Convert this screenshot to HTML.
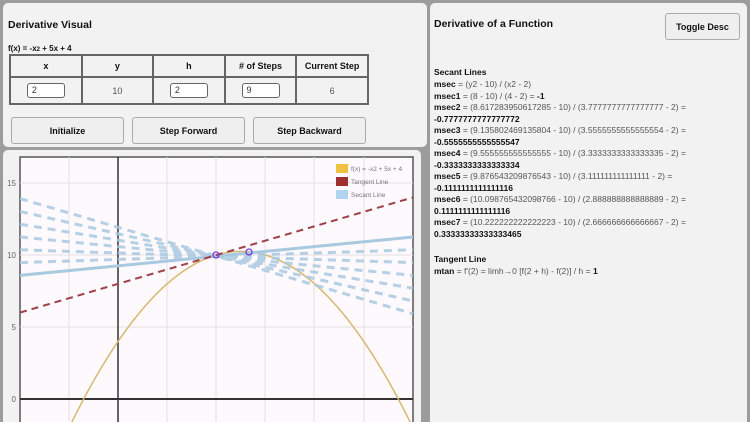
<!DOCTYPE html>
<html><head><meta charset="utf-8"><style>
*{margin:0;padding:0;box-sizing:border-box}
html,body{width:750px;height:422px;overflow:hidden}
body{background:#9c9c9c;font-family:"Liberation Sans",sans-serif;position:relative;color:#111}
.p{position:absolute;background:#f2f2f2;border-radius:5px}
.b{font-weight:bold}
.abs{position:absolute}
table{border-collapse:collapse;position:absolute;left:9px;top:54px;width:360px}
td{border:2px solid #666;text-align:center;font-size:9px;height:22px;width:72px}
tr.r td{height:27px;color:#555}
.in{display:inline-block;width:38px;height:15px;border:1px solid #666;border-radius:3px;background:#fff;text-align:left;padding-left:4px;line-height:13px;color:#333}
.btn{position:absolute;top:117px;width:113px;height:27px;background:#efefef;border:1px solid #aaa;border-radius:3px;font-size:9px;font-weight:bold;text-align:center;line-height:26px}
.rt{position:absolute;left:434px;font-size:8.5px;color:#555;white-space:nowrap}
.rt b{color:#111}
</style></head><body>
<div class="p" style="left:3px;top:3px;width:424px;height:144px"></div>
<div class="p" style="left:3px;top:150px;width:418px;height:272px;border-radius:5px 5px 0 0"></div>
<div class="p" style="left:430px;top:3px;width:317px;height:419px;border-radius:5px 5px 0 0"></div>
<div class="abs b" style="left:8px;top:19px;font-size:10.5px">Derivative Visual</div>
<div class="abs b" style="left:8px;top:44px;font-size:8px">f(x) = -x<span style="font-size:6px">2</span> + 5x + 4</div>
<table>
<tr><td class="b">x</td><td class="b">y</td><td class="b">h</td><td class="b"># of Steps</td><td class="b">Current Step</td></tr>
<tr class="r"><td><span class="in">2</span></td><td>10</td><td><span class="in">2</span></td><td><span class="in">9</span></td><td>6</td></tr>
</table>
<div class="btn" style="left:11px">Initialize</div>
<div class="btn" style="left:132px">Step Forward</div>
<div class="btn" style="left:253px">Step Backward</div>

<svg class="abs" style="left:0;top:0" width="430" height="422">
<defs><clipPath id="c"><rect x="20" y="157" width="393" height="265"/></clipPath></defs>
<rect x="20" y="157" width="393" height="265" fill="#fdf9fc"/>
<path d="M20,422 V157 H413 V422" fill="none" stroke="#555" stroke-width="1.5"/>
<g stroke="#e2e0e2" stroke-width="1">
<line x1="69" y1="157" x2="69" y2="422"/><line x1="167" y1="157" x2="167" y2="422"/><line x1="216" y1="157" x2="216" y2="422"/><line x1="265" y1="157" x2="265" y2="422"/><line x1="314" y1="157" x2="314" y2="422"/><line x1="364" y1="157" x2="364" y2="422"/>
<line x1="20" y1="183" x2="413" y2="183"/><line x1="20" y1="255" x2="413" y2="255"/><line x1="20" y1="327" x2="413" y2="327"/>
</g>
<line x1="118" y1="157" x2="118" y2="422" stroke="#333" stroke-width="1.5"/>
<line x1="20" y1="399" x2="413" y2="399" stroke="#333" stroke-width="2"/>
<g font-size="8" fill="#666" text-anchor="end"><text x="16" y="186">15</text><text x="16" y="258">10</text><text x="16" y="330">5</text><text x="16" y="402">0</text></g>
<g clip-path="url(#c)">
<path d="M20,543 Q216,24.6 413,427.8" fill="none" stroke="#d8b870" stroke-width="1.5"/>
<g stroke="#a9c9e0" stroke-width="3" stroke-dasharray="8 6" opacity="0.85" fill="none">
<line x1="20" y1="198.6" x2="413" y2="313.8"/>
<line x1="20" y1="211.4" x2="413" y2="301"/>
<line x1="20" y1="224.2" x2="413" y2="288.2"/>
<line x1="20" y1="237" x2="413" y2="275.4"/>
<line x1="20" y1="249.8" x2="413" y2="262.6"/>
<line x1="20" y1="262.6" x2="413" y2="249.8"/>
</g>
<line x1="20" y1="275.4" x2="413" y2="237" stroke="#a9c9e0" stroke-width="3"/>
<line x1="20" y1="312.6" x2="413" y2="197.4" stroke="#a04048" stroke-width="2" stroke-dasharray="7 5"/>
</g>
<circle cx="216" cy="255" r="3" fill="none" stroke="#7a3cd8" stroke-width="1.3"/>
<circle cx="249" cy="252" r="3" fill="none" stroke="#7a3cd8" stroke-width="1.3"/>
<rect x="336" y="164" width="12" height="9" fill="#f0c040"/>
<rect x="336" y="177" width="12" height="9" fill="#a03030"/>
<rect x="336" y="190" width="12" height="9" fill="#b0d4f0"/>
<g font-size="6.5" fill="#777"><text x="351" y="171">f(x) = -x2 + 5x + 4</text><text x="351" y="184">Tangent Line</text><text x="351" y="197">Secant Line</text></g>
</svg>

<div class="abs b" style="left:434px;top:18px;font-size:10.5px">Derivative of a Function</div>
<div class="abs b" style="left:665px;top:13px;width:75px;height:27px;border:1px solid #aaa;border-radius:3px;background:#efefef;font-size:9px;text-align:center;line-height:26px">Toggle Desc</div>
<div class="rt b" style="top:67px;color:#111">Secant Lines</div>
<div class="rt" style="top:79px"><b>msec</b> = (y2 - 10) / (x2 - 2)</div>
<div class="rt" style="top:91px"><b>msec1</b> = (8 - 10) / (4 - 2) = <b>-1</b></div>
<div class="rt" style="top:102px"><b>msec2</b> = (8.617283950617285 - 10) / (3.7777777777777777 - 2) =</div>
<div class="rt b" style="top:114px;color:#111">-0.7777777777777772</div>
<div class="rt" style="top:125px"><b>msec3</b> = (9.135802469135804 - 10) / (3.5555555555555554 - 2) =</div>
<div class="rt b" style="top:137px;color:#111">-0.5555555555555547</div>
<div class="rt" style="top:148px"><b>msec4</b> = (9.555555555555555 - 10) / (3.3333333333333335 - 2) =</div>
<div class="rt b" style="top:160px;color:#111">-0.3333333333333334</div>
<div class="rt" style="top:171px"><b>msec5</b> = (9.876543209876543 - 10) / (3.111111111111111 - 2) =</div>
<div class="rt b" style="top:183px;color:#111">-0.1111111111111116</div>
<div class="rt" style="top:194px"><b>msec6</b> = (10.098765432098766 - 10) / (2.888888888888889 - 2) =</div>
<div class="rt b" style="top:206px;color:#111">0.1111111111111116</div>
<div class="rt" style="top:217px"><b>msec7</b> = (10.222222222222223 - 10) / (2.666666666666667 - 2) =</div>
<div class="rt b" style="top:229px;color:#111">0.33333333333333465</div>
<div class="rt b" style="top:254px;color:#111">Tangent Line</div>
<div class="rt" style="top:266px"><b>mtan</b> = f'(2) = limh→0 [f(2 + h) - f(2)] / h = <b>1</b></div>
</body></html>
